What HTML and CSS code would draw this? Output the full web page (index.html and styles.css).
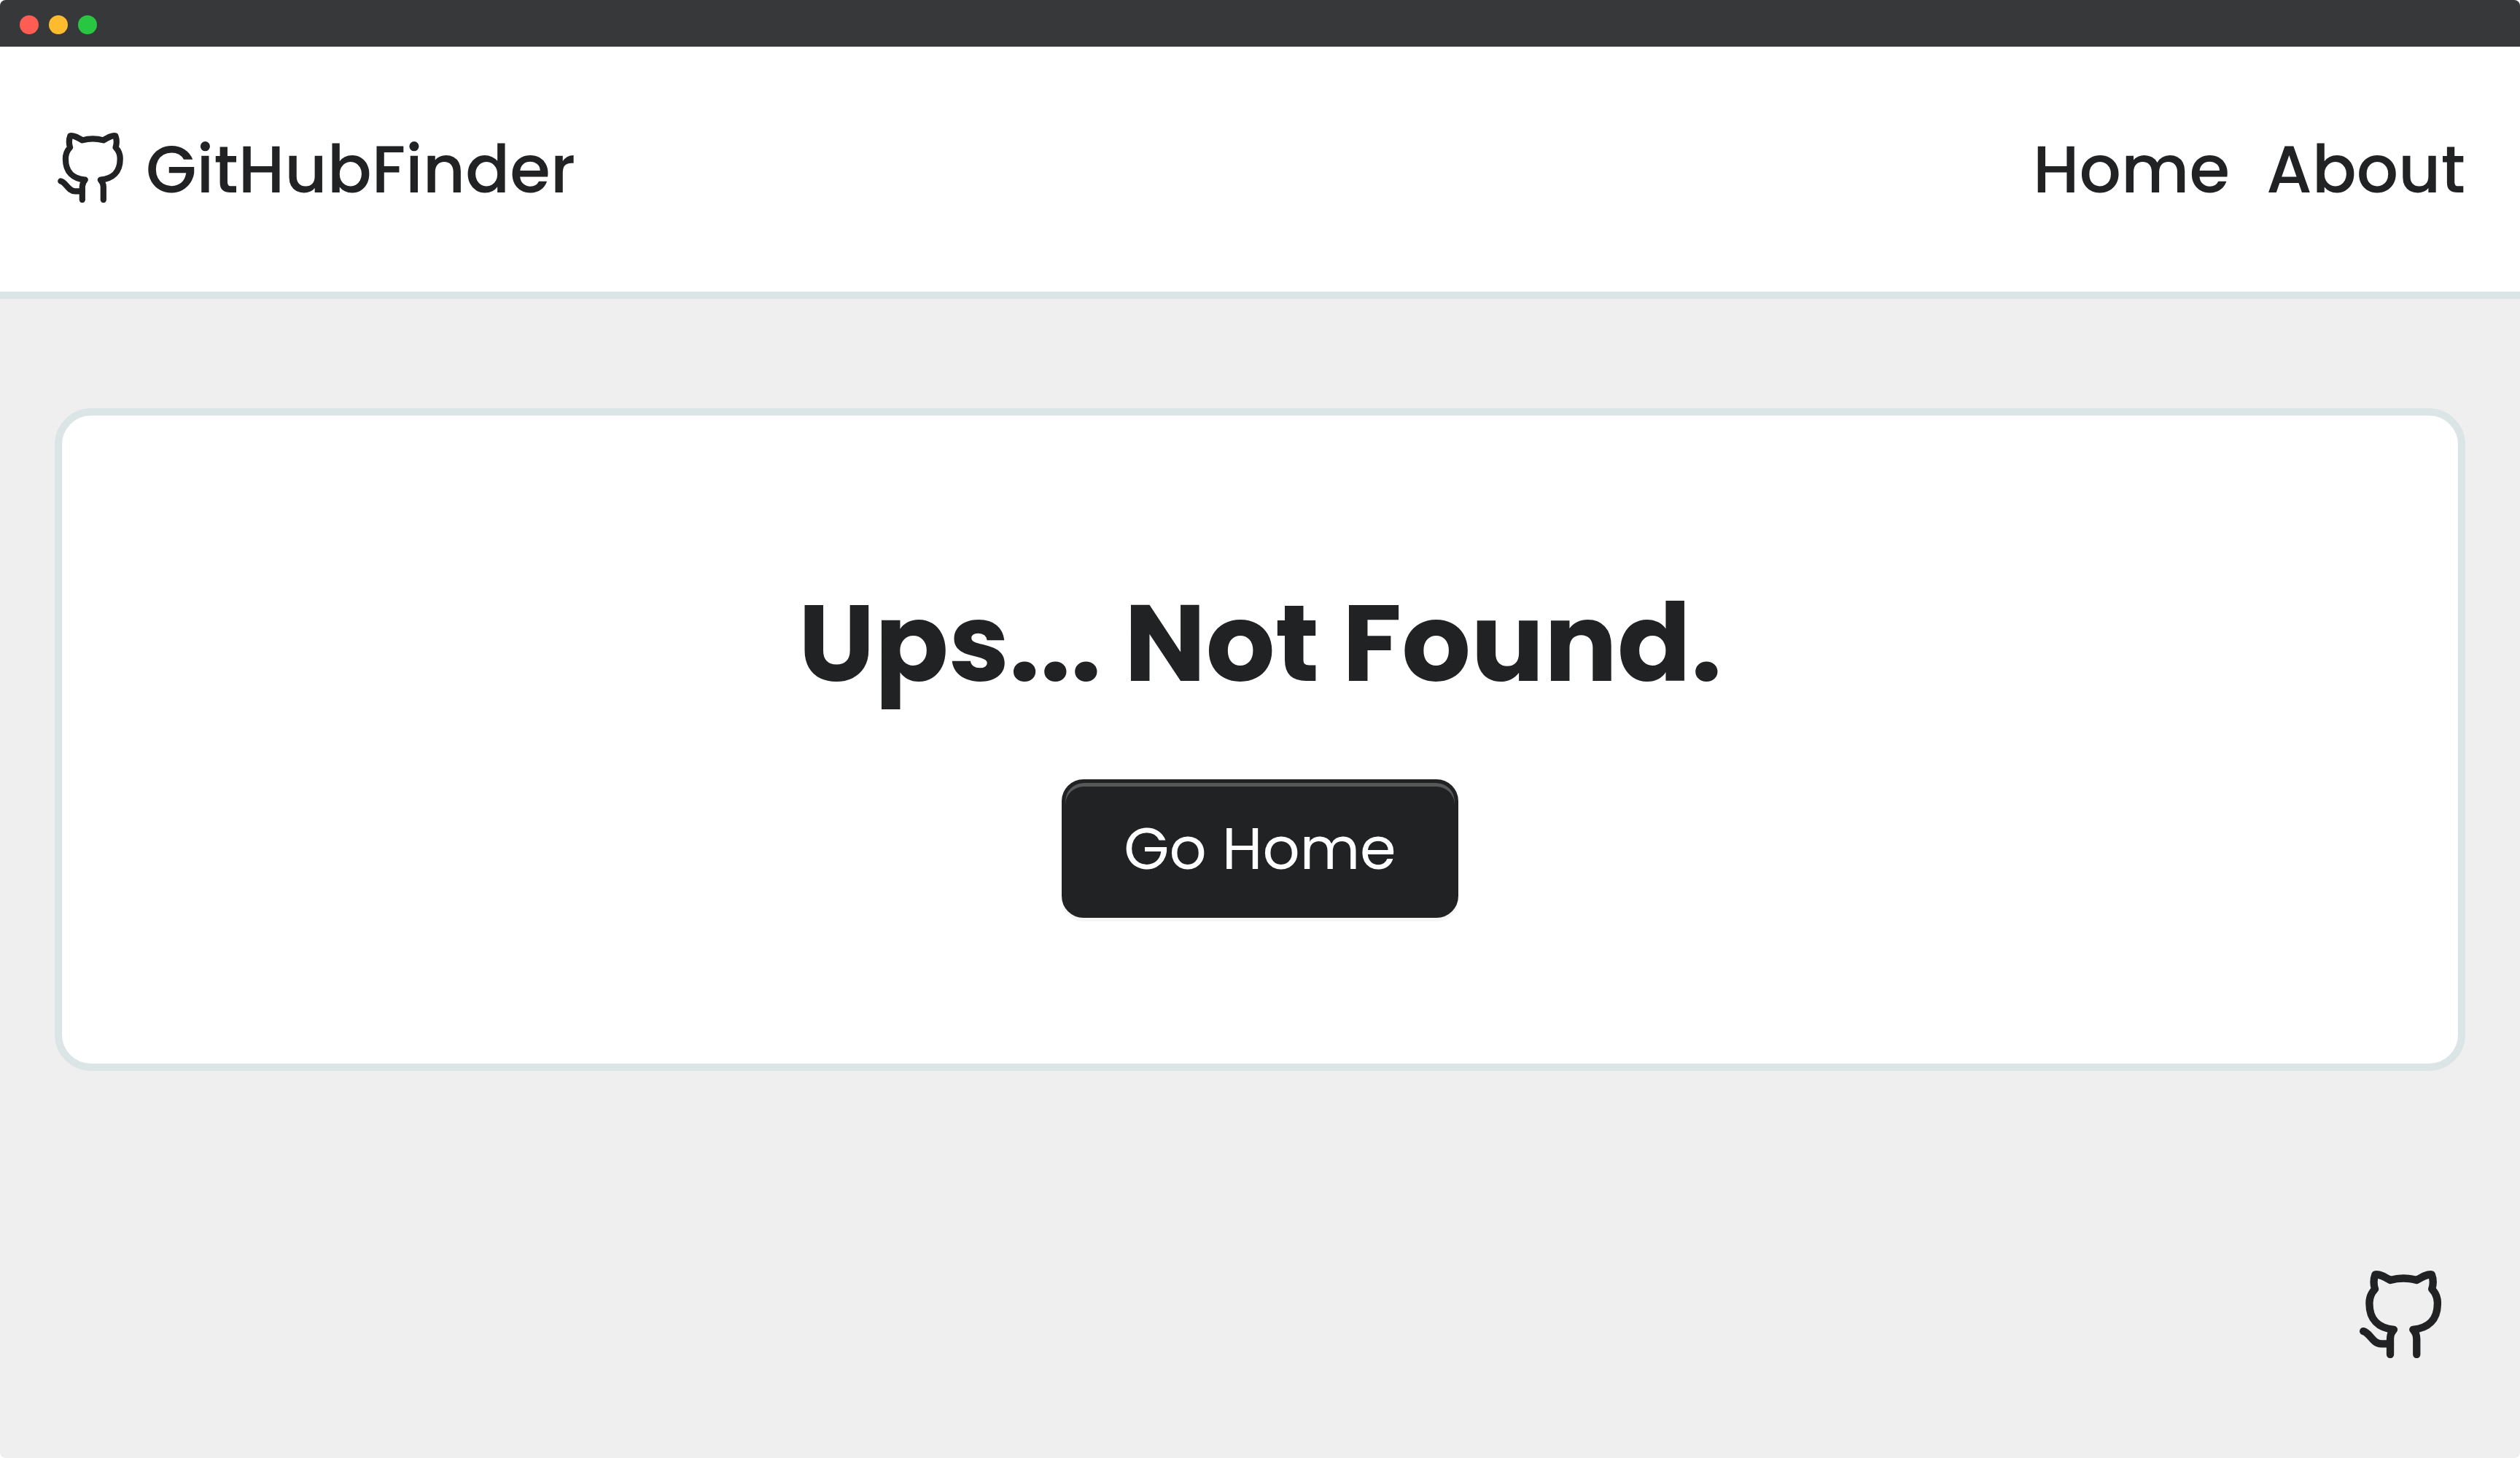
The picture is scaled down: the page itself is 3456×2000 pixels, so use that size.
FILE: index.html
```html
<!DOCTYPE html>
<html lang="en">
<head>
<meta charset="utf-8">
<meta name="viewport" content="width=device-width, initial-scale=1">
<title>GitHubFinder</title>
<link rel="stylesheet" href="styles.css">
</head>
<body>
<svg class="sprite" aria-hidden="true">
  <symbol id="octocat" viewBox="108 128 336 361">
    <g fill="none" stroke="currentColor" stroke-width="31" stroke-linecap="round" stroke-linejoin="round">
      <path d="M234 474V410C234 392 238 382 249 371C185 366 148 329 148 265C147 240 154 222 171 204C165 185 165 163 172 144C191 142 209 152 234 167C267 158 310 158 343 167C368 152 386 142 405 144C412 163 412 185 406 204C423 222 430 240 429 265C429 329 392 366 328 371C338 382 343 392 343 410V474"/>
      <path d="M123 378C150 383 160 430 198 430H234"/>
    </g>
  </symbol>
</svg>
<div class="window">
  <div class="titlebar">
    <span class="dot dot-close"></span>
    <span class="dot dot-minimize"></span>
    <span class="dot dot-zoom"></span>
  </div>
  <header class="header">
    <a class="brand" href="#">
      <svg class="brand-icon" aria-hidden="true"><use href="#octocat"/></svg>
      <span>GitHubFinder</span>
    </a>
    <nav class="nav">
      <a href="#">Home</a>
      <a href="#">About</a>
    </nav>
  </header>
  <main class="main">
    <section class="card">
      <h1 class="title">Ups... Not Found.</h1>
      <button class="button" type="button">Go Home</button>
    </section>
  </main>
  <footer class="footer">
    <a href="#" aria-label="GitHub"><svg class="footer-icon" aria-hidden="true"><use href="#octocat"/></svg></a>
  </footer>
</div>
</body>
</html>
```
FILE: styles.css
```css
* {
  box-sizing: border-box;
}

body {
  margin: 0;
  background: #ffffff;
  color: #202223;
  font-family: Poppins, Inter, sans-serif;
}

a {
  color: inherit;
  text-decoration: none;
}

.sprite {
  position: absolute;
  width: 0;
  height: 0;
}

.window {
  display: flex;
  flex-direction: column;
  min-height: 100vh;
  overflow: hidden;
  border-radius: 8px;
  background: #efefef;
}

.titlebar {
  display: flex;
  align-items: center;
  gap: 14px;
  height: 64px;
  padding: 4px 27px 0;
  background: #37383a;
}

.dot {
  width: 26px;
  height: 26px;
  border-radius: 50%;
}

.dot-close {
  background: #ff5c54;
}

.dot-minimize {
  background: #ffbb2e;
}

.dot-zoom {
  background: #28c641;
}

.header {
  display: flex;
  align-items: center;
  justify-content: space-between;
  padding: 101px 75px 99px;
  border-bottom: 10px solid #dce5e5;
  background: #ffffff;
  font-size: 90px;
  font-weight: 500;
  line-height: 136px;
}

.brand {
  display: flex;
  align-items: center;
  gap: 31px;
  padding-left: 4px;
}

.brand-icon {
  width: 90px;
  height: 96px;
  margin-bottom: 6px;
}

.nav {
  display: flex;
  gap: 50px;
}

.main {
  flex: 1;
  padding: 150px 75px;
}

.card {
  display: flex;
  flex-direction: column;
  align-items: center;
  gap: 75px;
  padding: 200px 75px;
  border: 10px solid #dce5e5;
  border-radius: 50px;
  background: #ffffff;
}

.title {
  margin: 0;
  font-size: 149px;
  font-weight: 700;
  line-height: 224px;
}

.button {
  padding: 30px 80px;
  border: 5px solid #202223;
  border-radius: 30px;
  background: #202223;
  box-shadow: inset 0 5px 0 #575959, 0 5px 0 #f6f6f6;
  color: #ffffff;
  font: inherit;
  font-size: 80px;
  line-height: 120px;
}

.footer {
  display: flex;
  justify-content: flex-end;
  padding: 0 108px 137px;
}

.footer-icon {
  display: block;
  width: 112px;
  height: 120px;
}
```
